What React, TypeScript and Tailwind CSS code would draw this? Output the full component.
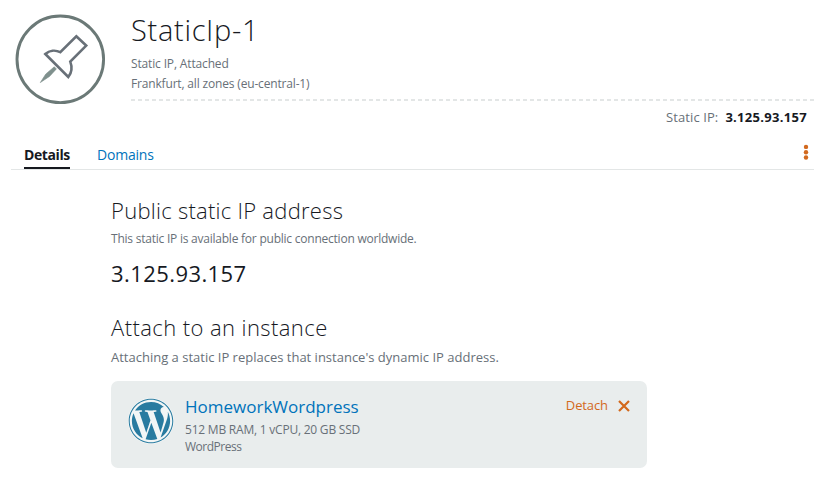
import React from "react";
import { FaWordpress } from "react-icons/fa";

const PinIcon = () => (
  <svg className="block h-[92px] w-[92px]" viewBox="0 0 92 92" fill="none">
    <circle cx="46.3" cy="45.3" r="43.3" stroke="#6b7977" strokeWidth="2.9" />
    <path
      d="M62.3 22.3 L72.2 31.6 L56.3 47.6 C58.3 53 57.8 58.5 54.3 63 L31.3 40 C35.5 36.3 41.5 35.8 46.3 38.2 Z"
      stroke="#687078"
      strokeWidth="2.6"
    />
    <path d="M40.3 52.8 L42.4 54.9 L35.5 62.4 L26.3 68.6 L31.8 60 Z" fill="#7f908d" stroke="#7f908d" strokeWidth="0.6" />
  </svg>
);

export default function App() {
  return (
    <div className="h-[482px] w-[814px] overflow-hidden bg-white font-['Open_Sans',sans-serif] text-[#16191f]">
      <header className="flex h-[128px] pl-[14px] pt-[14px]">
        <PinIcon />
        <div className="ml-[25px] flex-1">
          <h1 className="h-[38px] whitespace-nowrap text-[29px] font-light leading-[31px] tracking-[0.7px]">
            StaticIp-1
          </h1>
          <p className="h-5 whitespace-nowrap text-[12px] leading-[24px] tracking-[-0.15px] text-[#687078]">
            Static IP, Attached
          </p>
          <p className="h-[27px] whitespace-nowrap text-[12px] leading-[24px] tracking-[-0.17px] text-[#687078]">
            Frankfurt, all zones (eu-central-1)
          </p>
          <div className="h-[2px] bg-[repeating-linear-gradient(90deg,#e3e6e6_0_4px,transparent_4px_7px)]" />
          <p className="flex justify-end gap-[7px] whitespace-nowrap pr-[7px] pt-[6px] text-[13px] leading-[20px] text-[#687078]">
            <span className="tracking-[0.1px]">Static IP:</span>
            <b className="font-bold tracking-[0.3px] text-[#16191f]">3.125.93.157</b>
          </p>
        </div>
      </header>

      <nav className="ml-[11px] flex h-[42px] items-end border-b border-[#e3e6e6] pl-[13px] text-[14px]">
        <span className="h-[26px] w-[46px] whitespace-nowrap border-b-2 border-[#16191f] font-bold leading-[23px] tracking-[-0.4px]">
          Details
        </span>
        <span className="ml-[27px] h-[26px] whitespace-nowrap leading-[23px] tracking-[-0.2px] text-[#0073bb]">
          Domains
        </span>
        <svg className="ml-auto mr-[4px] h-[33px] w-[8px]" viewBox="0 0 8 33" fill="#d2691e">
          <circle cx="4" cy="10.9" r="2.2" />
          <circle cx="4" cy="16.2" r="2.2" />
          <circle cx="4" cy="21.5" r="2.2" />
        </svg>
      </nav>

      <main className="ml-[111px] w-[536px] whitespace-nowrap pt-[24px]">
        <h2 className="h-[35px] text-[22px] font-light leading-[32px] tracking-[0.26px]">Public static IP address</h2>
        <p className="h-[28px] text-[12px] leading-[20px] tracking-[-0.23px] text-[#687078]">
          This static IP is available for public connection worldwide.
        </p>
        <p className="h-[54px] text-[22px] leading-[32px] tracking-[0.42px]">3.125.93.157</p>
        <h2 className="h-[36px] text-[22px] font-light leading-[32px] tracking-[0.42px]">Attach to an instance</h2>
        <p className="h-[34px] text-[13px] leading-[20px] text-[#687078]">
          Attaching a static IP replaces that instance&apos;s dynamic IP address.
        </p>
        <section className="flex h-[87px] rounded-[7px] bg-[#e9eded] pl-[17px] pt-[17px]">
          <FaWordpress className="h-[46px] w-[46px] rounded-full bg-[#f2f6f6] text-[#287ba0]" />
          <div className="ml-[11px]">
            <h3 className="h-[23px] text-[17px] leading-[17px] text-[#0073bb]">HomeworkWordpress</h3>
            <p className="h-[17px] text-[12px] leading-[17px] tracking-[-0.22px] text-[#687078]">
              512 MB RAM, 1 vCPU, 20 GB SSD
            </p>
            <p className="text-[12px] leading-[17px] tracking-[-0.5px] text-[#687078]">WordPress</p>
          </div>
          <div className="ml-auto mr-[17px] flex h-[16px] items-center gap-[10px] text-[13px] text-[#d3691c]">
            <span className="tracking-[-0.1px]">Detach</span>
            <svg className="h-[12px] w-[12px]" viewBox="0 0 12 12" stroke="#d3691c" strokeWidth="2.2">
              <path d="M1 1 L11 11 M11 1 L1 11" />
            </svg>
          </div>
        </section>
      </main>
    </div>
  );
}
